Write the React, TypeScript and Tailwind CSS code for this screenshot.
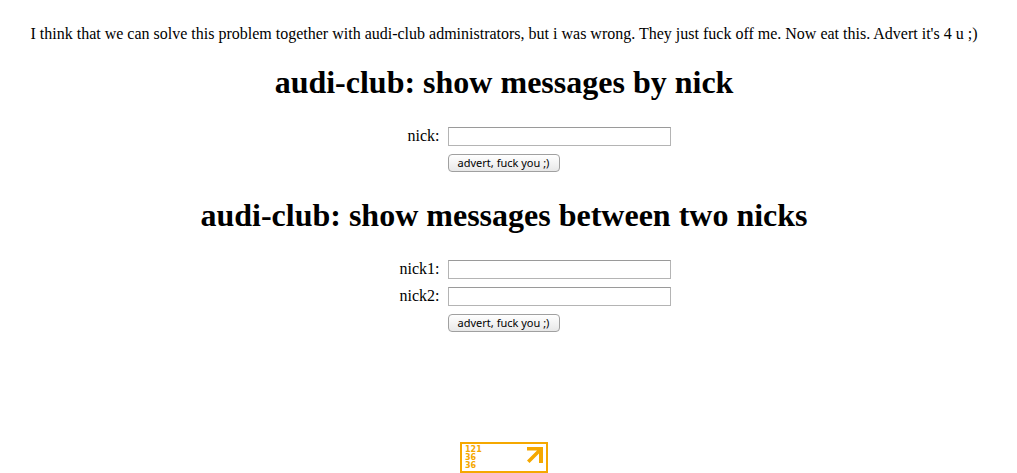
import React from 'react';

type Field = { id: string; label: string };

function NickForm({ title, fields }: { title: string; fields: Field[] }) {
  return (
    <section className="flex flex-col">
      <h1 className="text-[32px] leading-9 font-bold text-center">{title}</h1>
      <form
        className="mt-[27px] grid grid-cols-[1fr_223px_1fr] gap-2 pl-[110px]"
        onSubmit={(e) => e.preventDefault()}
      >
        {fields.map((f) => (
          <React.Fragment key={f.id}>
            <label htmlFor={f.id} className="col-start-1 text-right leading-[18px]">
              {f.label}
            </label>
            <input
              id={f.id}
              type="text"
              className="h-[19px] w-full border border-[#b4b4b4] border-t-[#9a9a9a] bg-white px-1 text-xs"
            />
          </React.Fragment>
        ))}
        <button
          type="submit"
          className="col-start-2 h-[18px] w-28 rounded border border-[#a0a0a0] bg-linear-to-b from-white to-[#e8e8e8] font-['Noto_Sans',sans-serif] text-[11px] leading-4 whitespace-nowrap"
        >
          advert, fuck you ;)
        </button>
      </form>
    </section>
  );
}

function Counter() {
  return (
    <a
      href="#stats"
      aria-label="Visitor statistics"
      className="flex h-[31px] w-[88px] justify-between border-2 border-[#f5a800] bg-white pt-[2px] pr-[3px] pl-[3px] text-[#f5a800]"
    >
      <span className="flex flex-col font-['DejaVu_Sans',sans-serif] text-[8px] leading-2 font-bold">
        <span>121</span>
        <span>36</span>
        <span>36</span>
      </span>
      <svg viewBox="0 0 17 17" className="mt-px size-[17px]" fill="currentColor" aria-hidden="true">
        <path d="M1 0H17V16H13V6.5L3.5 16L1 13.5L11 3.5H1Z" />
      </svg>
    </a>
  );
}

export default function App() {
  return (
    <main className="min-h-screen bg-white pt-6 pr-[9px] font-['Liberation_Serif',serif] text-base text-black">
      <p className="text-center leading-5">
        I think that we can solve this problem together with audi-club administrators, but i was wrong. They just fuck off me. Now eat this. Advert it's 4 u ;)
      </p>
      <div className="mt-5 flex flex-col gap-[25px]">
        <NickForm title="audi-club: show messages by nick" fields={[{ id: 'nick', label: 'nick:' }]} />
        <NickForm
          title="audi-club: show messages between two nicks"
          fields={[
            { id: 'nick1', label: 'nick1:' },
            { id: 'nick2', label: 'nick2:' },
          ]}
        />
      </div>
      <footer className="mt-[110px] flex justify-center">
        <Counter />
      </footer>
    </main>
  );
}
